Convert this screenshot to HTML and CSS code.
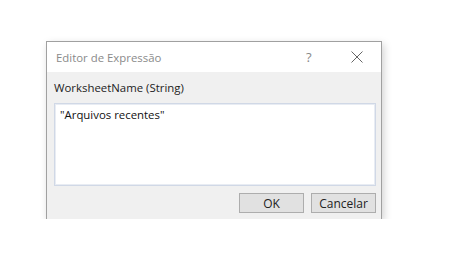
FILE: index.html
```html
<!DOCTYPE html>
<html lang="pt">
<head>
    <meta charset="UTF-8">
    <title>Editor de Expressão</title>
    <link rel="stylesheet" href="styles.css">
</head>
<body>
    <div class="dialog">
        <div class="titlebar">
            <span class="title">Editor de Expressão</span>
            <span class="help">?</span>
            <svg class="close" width="12" height="12" viewBox="0 0 12 12">
                <path d="M0.5 0.5 L11.5 11.5 M11.5 0.5 L0.5 11.5" stroke="#666" stroke-width="1" fill="none"/>
            </svg>
        </div>
        <div class="content">
            <div class="label">WorksheetName (String)</div>
            <div class="editor">"Arquivos recentes"</div>
            <div class="buttons">
                <button class="btn">OK</button>
                <button class="btn">Cancelar</button>
            </div>
        </div>
    </div>
</body>
</html>
```

FILE: styles.css
```css
body {
    margin: 0;
    background: #ffffff;
    font-family: 'Segoe UI', 'Open Sans', 'Noto Sans', sans-serif;
    font-size: 11.4px;
}
.dialog {
    margin: 41px 0 0 46px;
    width: 334px;
    border: 1px solid #a0a0a0;
    border-bottom: none;
    background: #f0f0f0;
    box-shadow: 2px 3px 8px rgba(0, 0, 0, 0.18);
}
.titlebar {
    height: 30px;
    background: #ffffff;
    display: flex;
    align-items: center;
    padding-left: 9px;
}
.title {
    color: #8a8a8a;
    flex: 1;
}
.help {
    color: #888;
    width: 20px;
    margin-right: 25px;
    font-size: 13px;
}
.close {
    margin-right: 18px;
}
.content {
    padding: 8px 5px 6px 7px;
}
.label {
    color: #222;
    height: 23px;
}
.editor {
    background: #ffffff;
    border: 1px solid #d0d8e6;
    box-shadow: inset 0 0 0 1px #e8ecf3;
    padding: 3px 5px;
    color: #111;
    box-sizing: border-box;
    height: 83px;
}
.buttons {
    display: flex;
    justify-content: flex-end;
    gap: 7px;
    margin-top: 7px;
}
.btn {
    width: 65px;
    height: 20px;
    padding: 0;
    background: #e1e1e1;
    border: 1px solid #adadad;
    font-family: inherit;
    font-size: 12px;
    color: #222;
}
```
